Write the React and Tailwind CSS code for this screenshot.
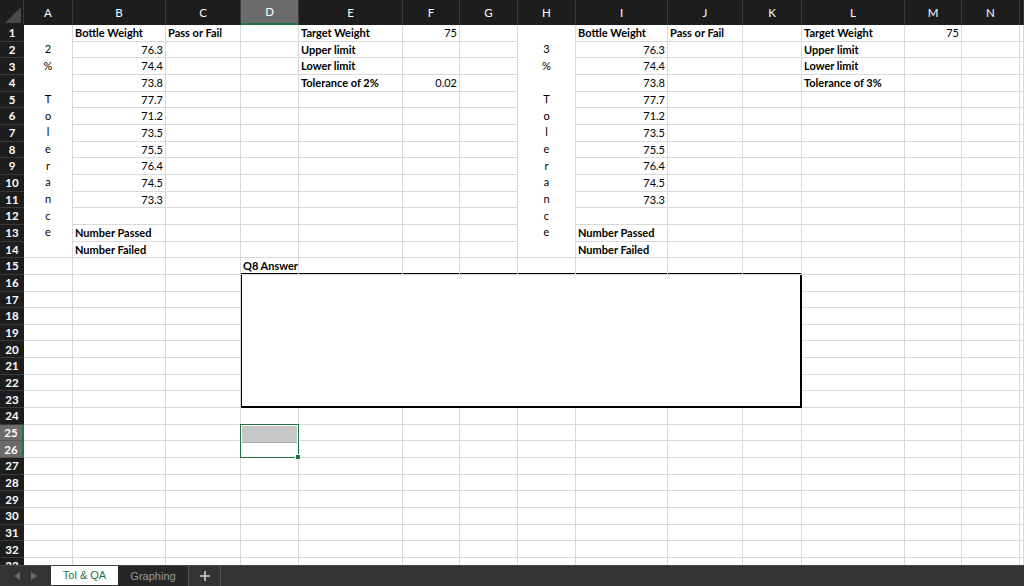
import React from "react";

const COLS = ["A", "B", "C", "D", "E", "F", "G", "H", "I", "J", "K", "L", "M", "N", ""];
const ROWS = Array.from({ length: 33 }, (_, i) => i + 1);
const WEIGHTS = ["76.3", "74.4", "73.8", "77.7", "71.2", "73.5", "75.5", "76.4", "74.5", "73.3"];

// cell contents keyed "row-colIndex"; b = bold, r = right aligned
const cells = {};
const put = (r, c, text, opts = {}) => (cells[`${r}-${c}`] = { text, ...opts });

// left block
put(1, 1, "Bottle Weight", { b: true });
put(1, 2, "Pass or Fail", { b: true });
put(1, 4, "Target Weight", { b: true });
put(1, 5, "75", { r: true });
put(2, 4, "Upper limit", { b: true });
put(3, 4, "Lower limit", { b: true });
put(4, 4, "Tolerance of 2%", { b: true });
put(4, 5, "0.02", { r: true });
put(13, 1, "Number Passed", { b: true });
put(14, 1, "Number Failed", { b: true });
put(15, 3, "Q8 Answer", { b: true });

// right block
put(1, 8, "Bottle Weight", { b: true });
put(1, 9, "Pass or Fail", { b: true });
put(1, 11, "Target Weight", { b: true });
put(1, 12, "75", { r: true });
put(2, 11, "Upper limit", { b: true });
put(3, 11, "Lower limit", { b: true });
put(4, 11, "Tolerance of 3%", { b: true });
put(13, 8, "Number Passed", { b: true });
put(14, 8, "Number Failed", { b: true });

WEIGHTS.forEach((w, i) => {
  put(i + 2, 1, w, { r: true });
  put(i + 2, 8, w, { r: true });
});

function covered(r, c) {
  if ((c === 0 || c === 7) && r <= 14) return true;
  if (c >= 3 && c <= 10 && r >= 16 && r <= 23) return true;
  if (c === 3 && (r === 25 || r === 26)) return true;
  return false;
}

function VerticalLabel({ pct }) {
  const lines = [pct, "%", "", "T", "o", "l", "e", "r", "a", "n", "c", "e"];
  return (
    <div className="flex flex-col items-center justify-center border-r border-b border-[#d9d9d9]">
      {lines.map((ch, i) => (
        <div key={i} className="h-[16.667px] leading-[16.667px]">
          {ch}
        </div>
      ))}
    </div>
  );
}

export default function App() {
  return (
    <div className="w-[1024px] h-[586px] flex flex-col bg-white overflow-hidden font-[Lato,sans-serif] text-[11px] text-black">
      <div className="flex-1 overflow-hidden">
        <div className="grid grid-cols-[24px_49px_93px_75px_58px_104px_57px_58px_58px_92px_75px_59px_103px_57px_58px_1fr] grid-rows-[25px_repeat(33,16.667px)]">
          {/* merged cells */}
          <div className="col-start-2 row-start-2 row-span-14 grid">
            <VerticalLabel pct="2" />
          </div>
          <div className="col-start-9 row-start-2 row-span-14 grid">
            <VerticalLabel pct="3" />
          </div>
          <div className="col-start-5 col-span-8 row-start-17 row-span-8 -ml-px -mt-[2px] border-2 border-black bg-white" />
          <div className="col-start-5 row-start-26 row-span-2 relative -ml-px -mt-px">
            <div className="h-1/2 bg-[#c7c7c7] border-b border-[#a9a9a9] mx-[2px] mt-[2px]" />
            <div className="absolute inset-0 border-[1.5px] border-[#217346]" />
            <div className="absolute -right-[2px] -bottom-[2px] w-[6px] h-[6px] bg-[#217346] border border-white" />
          </div>

          {/* column header row */}
          <div className="bg-[#1d1d1d] border-r border-[#3a3a3a] relative">
            <svg className="absolute right-[2px] bottom-[2px]" width="16" height="16" viewBox="0 0 16 16">
              <polygon points="16,0 16,16 0,16" fill="#4a4a4a" />
            </svg>
          </div>
          {COLS.map((c, i) => (
            <div
              key={i}
              className={
                i === 3
                  ? "bg-[#6b6b6b] border-r border-[#3a3a3a] border-b-2 border-b-[#217346] text-white text-[11.5px] flex items-center justify-center"
                  : "bg-[#1d1d1d] border-r border-[#3a3a3a] text-white text-[11.5px] flex items-center justify-center"
              }
            >
              {c}
            </div>
          ))}

          {/* body */}
          {ROWS.map((r) => (
            <React.Fragment key={r}>
              <div
                className={
                  r === 25 || r === 26
                    ? "bg-[#6b6b6b] border-b border-[#555] border-r-2 border-r-[#217346] text-white font-bold text-[11.5px] flex items-center justify-center"
                    : "bg-[#1d1d1d] border-b border-[#3a3a3a] text-white font-bold text-[11.5px] flex items-center justify-center"
                }
              >
                {r}
              </div>
              {COLS.map((_, c) => {
                if (covered(r, c)) return null;
                const cell = cells[`${r}-${c}`];
                return (
                  <div
                    key={c}
                    className={
                      cell && cell.r
                        ? "border-r border-b border-[#d9d9d9] pr-[2px] text-right leading-[16px] whitespace-nowrap"
                        : cell && cell.b
                        ? "border-r border-b border-[#d9d9d9] pl-[2px] font-bold leading-[16px] whitespace-nowrap"
                        : "border-r border-b border-[#d9d9d9] pl-[2px] leading-[16px] whitespace-nowrap"
                    }
                  >
                    {cell ? cell.text : ""}
                  </div>
                );
              })}
            </React.Fragment>
          ))}
        </div>
      </div>

      {/* sheet tabs */}
      <div className="h-[21px] flex items-stretch bg-[#333333] border-t border-[#444] font-['Liberation_Sans',sans-serif] text-[11px]">
        <div className="w-[51px] flex items-center justify-center gap-[11px]">
          <svg width="6" height="8" viewBox="0 0 6 8">
            <polygon points="6,0 6,8 0,4" fill="#6a6a6a" />
          </svg>
          <svg width="6" height="8" viewBox="0 0 6 8">
            <polygon points="0,0 0,8 6,4" fill="#6a6a6a" />
          </svg>
        </div>
        <div className="w-[67px] bg-white text-[#1e7145] flex items-center justify-center mb-[1px]">Tol &amp; QA</div>
        <div className="w-[71px] bg-[#262626] text-[#9a9a9a] flex items-center justify-center border-r border-[#555]">
          Graphing
        </div>
        <div className="w-[32px] flex items-center justify-center border-r border-[#555]">
          <svg width="10" height="10" viewBox="0 0 10 10">
            <path d="M5 0v10M0 5h10" stroke="#d0d0d0" strokeWidth="1.6" />
          </svg>
        </div>
        <div className="flex-1" />
      </div>
    </div>
  );
}
